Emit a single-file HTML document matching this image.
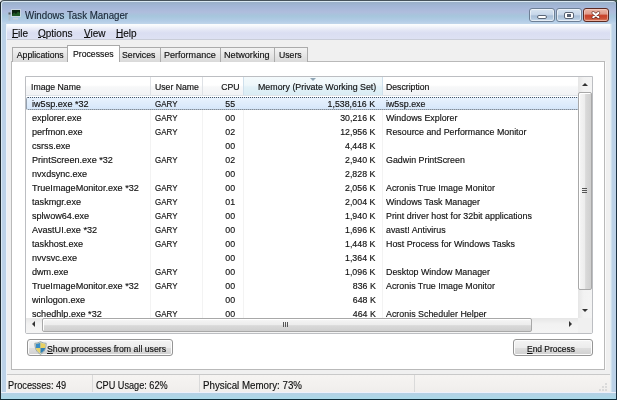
<!DOCTYPE html>
<html><head><meta charset="utf-8">
<style>
*{box-sizing:border-box}
html,body{margin:0;padding:0;width:617px;height:400px;overflow:hidden;background:#fff}
body{position:relative;font-family:"Liberation Sans",sans-serif;color:#111;-webkit-text-stroke:0.15px currentColor}
div,span{position:absolute}
.t{white-space:nowrap;line-height:12px}
.menu{top:27.6px;font-size:10px}
.menu u{text-decoration:underline;text-underline-offset:0px}
.tab{top:47px;height:15px;border:1px solid #ababab;border-bottom:none;background:linear-gradient(#f3f3f3,#e4e4e4 60%,#d9d9d9);}
.tab.sel{top:45px;height:17px;background:#fff;border-color:#a9a9a9}
.tl{top:49px;font-size:8.7px}
.hc{top:83px;font-size:8.7px;line-height:8px}
.row{left:26px;width:552px;height:14px;font-size:9.1px;line-height:14px}
.row span{top:0.3px;white-space:nowrap;transform:scaleX(0.967);transform-origin:0 50%}
.row .c2,.row .c3{transform-origin:100% 50%}
.row .c1{transform:scaleX(0.88)}
.row .c0{transform:scaleX(1.0)}
.row .c4{transform:scaleX(0.975)}
.c0{left:6px}.c1{left:129px}.c2{right:343px}.c3{right:202.5px}.c4{left:360px}
.btn{height:17px;border:1px solid #959595;border-radius:3px;background:linear-gradient(#f4f4f4 0,#ececec 50%,#dfdfdf 51%,#d0d0d0 100%);box-shadow:inset 0 0 0 1px #fcfcfc}
.st{top:379px;font-size:10.3px;transform-origin:0 0;transform:scaleX(0.87)}
.sep{top:375px;width:1px;height:17px;background:#dadada}
.arrow{width:0;height:0;border-style:solid}
</style></head><body><div id="wrap" style="left:0;top:0;width:617px;height:400px;overflow:hidden;filter:blur(0.35px)">
<!-- outer frame -->
<div style="left:611px;top:0;width:6px;height:6px;background:#3c5a48"></div>
<div style="left:0;top:0;width:6px;height:6px;background:#e8ecec"></div>
<div style="left:0;top:0;width:617px;height:400px;background:#46525a;border-radius:4px 4px 0 0"></div>
<div style="left:1px;top:1px;width:615px;height:398px;background:#d9e8f2;border-radius:3px 3px 0 0"></div>
<div style="left:2px;top:2px;width:614px;height:397px;background:linear-gradient(#9ab0c8 0px,#a2b6d6 4px,#afbddd 10px,#a6c6dc 14px,#b2cce6 19px,#bed4ea 21.5px,#bcd2e8 22px,#bcd2e8 100%);border-radius:2px 2px 0 0"></div>
<div style="left:1px;top:392px;width:615px;height:8px;background:linear-gradient(#eef0fb 0,#eef0fb 1px,#b4d0e4 1px,#aad8e8 7px,#0f2c3a 7px)"></div>
<div style="left:616px;top:2px;width:1px;height:398px;background:#1a3040"></div>
<div style="left:610px;top:24px;width:1px;height:368px;background:#e4eef4"></div><div style="left:611px;top:24px;width:1px;height:368px;background:#cddfec"></div>
<div style="left:0;top:2px;width:1px;height:398px;background:#1e2a30"></div>
<div style="left:6px;top:24px;width:604px;height:368px;background:#eef4fb"></div>

<!-- icon -->
<svg style="position:absolute;left:7px;top:8px" width="15" height="14" viewBox="0 0 15 14">
<rect x="4" y="1" width="10" height="8" fill="#d4e0e4" opacity="0.7"/>
<rect x="5" y="2" width="8" height="6" fill="#0c2410"/>
<path d="M5 7 L7 4.5 L9 6 L11 3.5 L13 5 L13 8 L5 8Z" fill="#1f5a26"/>
<rect x="6" y="10" width="5" height="1.5" fill="#c8d4d8"/>
<rect x="1.5" y="4.5" width="2" height="8" fill="#b0bcc4" opacity="0.8"/>
<rect x="1.5" y="4.5" width="2" height="2" fill="#505a60"/>
</svg>
<span class="t" style="left:25px;top:9.5px;font-size:10.2px;color:#1a2636;transform-origin:0 0;transform:scaleX(0.955)">Windows Task Manager</span>

<!-- caption buttons -->
<div style="left:529px;top:8px;width:26px;height:14px;border:1px solid #6d7f95;border-radius:3px;background:linear-gradient(#d8e4f0,#c8d8ea 45%,#a8bed6 58%,#b4cae0 80%,#cadcec);box-shadow:inset 0 0 0 1px rgba(255,255,255,.55)"></div>
<div style="left:537px;top:15px;width:10px;height:4px;background:#fff;border:1px solid #5a6676;border-radius:2px"></div>
<div style="left:556px;top:8px;width:26px;height:14px;border:1px solid #6d7f95;border-radius:3px;background:linear-gradient(#d8e4f0,#c8d8ea 45%,#a8bed6 58%,#b4cae0 80%,#cadcec);box-shadow:inset 0 0 0 1px rgba(255,255,255,.55)"></div>
<div style="left:564px;top:12px;width:10px;height:7px;border:1px solid #5a6676;background:#fff;border-radius:2px"></div>
<div style="left:567px;top:14px;width:4px;height:3px;background:#5a6474"></div>
<div style="left:583px;top:8px;width:26px;height:14px;border:1px solid #5c2a22;border-radius:3px;background:linear-gradient(#ecb8a8,#e09c8c 40%,#c84028 55%,#cc5238 80%,#de8a6c);box-shadow:inset 0 0 0 1px rgba(255,220,210,.5)"></div>
<svg style="position:absolute;left:589px;top:10px" width="14" height="11" viewBox="0 0 14 11"><path d="M4.2 2.9 L9.5 7.2 M9.5 2.9 L4.2 7.2" stroke="#6a3024" stroke-width="3.3" stroke-linecap="round"/><path d="M4.2 2.9 L9.5 7.2 M9.5 2.9 L4.2 7.2" stroke="#fff" stroke-width="2" stroke-linecap="round"/></svg>

<!-- client area -->
<div style="left:7px;top:24px;width:603px;height:368px;background:#f0f0f0"></div>
<div style="left:7px;top:24px;width:603px;height:15px;background:linear-gradient(#fbfdff 0,#f6f8fc 2px,#e4e7f5 6px,#dadef2 9px,#dde1f3 15px)"></div><div style="left:7px;top:39px;width:603px;height:1px;background:#c9cdd8"></div>
<span class="t menu" style="left:12px"><u>F</u>ile</span>
<span class="t menu" style="left:38px"><u>O</u>ptions</span>
<span class="t menu" style="left:84px"><u>V</u>iew</span>
<span class="t menu" style="left:116px"><u>H</u>elp</span>

<!-- panel -->
<div style="left:11px;top:61px;width:594px;height:309px;background:#fff;border:1px solid #b9b9b9"></div>
<div style="left:605px;top:62px;width:1px;height:308px;background:#fafafa"></div>
<div class="tab" style="left:12px;width:56px"></div>
<div class="tab" style="left:119px;width:42px"></div>
<div class="tab" style="left:160px;width:61px"></div>
<div class="tab" style="left:220px;width:55px"></div>
<div class="tab" style="left:274px;width:34px"></div>
<div class="tab sel" style="left:67px;width:53px"></div>
<span class="t tl" style="left:16.8px">Applications</span>
<span class="t tl" style="left:73px;top:48px">Processes</span>
<span class="t tl" style="left:122px">Services</span>
<span class="t tl" style="left:164px;transform-origin:0 0;transform:scaleX(1.04)">Performance</span>
<span class="t tl" style="left:224px;transform-origin:0 0;transform:scaleX(1.05)">Networking</span>
<span class="t tl" style="left:279px">Users</span>

<!-- listview -->
<div style="left:25px;top:76px;width:568px;height:258px;border:1px solid #bcbec2;border-radius:0 0 2px 2px;background:#fff"></div>
<div style="left:26px;top:77px;width:552px;height:18px;background:linear-gradient(#fff 0,#fff 45%,#f7f8f9 55%,#f1f2f4 100%)"></div>
<div style="left:243px;top:77px;width:139px;height:18px;background:linear-gradient(#f4fafc 0,#eef7fa 45%,#e2f1f7 55%,#d9ecf4 100%)"></div>
<div style="left:26px;top:95px;width:552px;height:1px;background:#dfe4ea"></div><div style="left:26px;top:96px;width:552px;height:1px;background:#fff"></div>
<div style="left:150px;top:77px;width:1px;height:18px;background:#dfe2e6"></div>
<div style="left:202px;top:77px;width:1px;height:18px;background:#dfe2e6"></div>
<div style="left:243px;top:77px;width:1px;height:18px;background:#cfe0ec"></div>
<div style="left:382px;top:77px;width:1px;height:18px;background:#cfe0ec"></div>
<div class="arrow" style="left:309.5px;top:78px;border-width:3px 3.5px 0 3.5px;border-color:#8ea4b4 transparent transparent transparent"></div>
<span class="t hc" style="left:31px">Image Name</span>
<span class="t hc" style="left:155px">User Name</span>
<span class="t hc" style="left:221.3px">CPU</span>
<span class="t hc" style="left:258px;font-size:8.85px">Memory (Private Working Set)</span>
<span class="t hc" style="left:386px">Description</span>

<!-- faint column lines in body -->
<div style="left:150px;top:97px;width:1px;height:221px;background:#f3f3f3"></div>
<div style="left:202px;top:97px;width:1px;height:221px;background:#f3f3f3"></div>
<div style="left:243px;top:97px;width:1px;height:221px;background:#f3f3f3"></div>
<div style="left:382px;top:97px;width:1px;height:221px;background:#f3f3f3"></div>

<!-- selected row -->
<div style="left:26px;top:97px;width:566px;height:13px;background:linear-gradient(#e8f2fd,#d6e7fa);border:1px dotted #4a5664;border-radius:2px"></div>

<div style="left:0;top:0;width:617px;height:318px;overflow:hidden">
<div class="row" style="top:97px"><span class="c0">iw5sp.exe *32</span><span class="c1">GARY</span><span class="c2">55</span><span class="c3">1,538,616 K</span><span class="c4">iw5sp.exe</span></div>
<div class="row" style="top:111px"><span class="c0">explorer.exe</span><span class="c1">GARY</span><span class="c2">00</span><span class="c3">30,216 K</span><span class="c4">Windows Explorer</span></div>
<div class="row" style="top:125px"><span class="c0">perfmon.exe</span><span class="c1">GARY</span><span class="c2">02</span><span class="c3">12,956 K</span><span class="c4">Resource and Performance Monitor</span></div>
<div class="row" style="top:139px"><span class="c0">csrss.exe</span><span class="c1"></span><span class="c2">00</span><span class="c3">4,448 K</span><span class="c4"></span></div>
<div class="row" style="top:153px"><span class="c0">PrintScreen.exe *32</span><span class="c1">GARY</span><span class="c2">02</span><span class="c3">2,940 K</span><span class="c4">Gadwin PrintScreen</span></div>
<div class="row" style="top:167px"><span class="c0">nvxdsync.exe</span><span class="c1"></span><span class="c2">00</span><span class="c3">2,828 K</span><span class="c4"></span></div>
<div class="row" style="top:181px"><span class="c0">TrueImageMonitor.exe *32</span><span class="c1">GARY</span><span class="c2">00</span><span class="c3">2,056 K</span><span class="c4">Acronis True Image Monitor</span></div>
<div class="row" style="top:195px"><span class="c0">taskmgr.exe</span><span class="c1">GARY</span><span class="c2">01</span><span class="c3">2,004 K</span><span class="c4">Windows Task Manager</span></div>
<div class="row" style="top:209px"><span class="c0">splwow64.exe</span><span class="c1">GARY</span><span class="c2">00</span><span class="c3">1,940 K</span><span class="c4">Print driver host for 32bit applications</span></div>
<div class="row" style="top:223px"><span class="c0">AvastUI.exe *32</span><span class="c1">GARY</span><span class="c2">00</span><span class="c3">1,696 K</span><span class="c4">avast! Antivirus</span></div>
<div class="row" style="top:237px"><span class="c0">taskhost.exe</span><span class="c1">GARY</span><span class="c2">00</span><span class="c3">1,448 K</span><span class="c4">Host Process for Windows Tasks</span></div>
<div class="row" style="top:251px"><span class="c0">nvvsvc.exe</span><span class="c1"></span><span class="c2">00</span><span class="c3">1,364 K</span><span class="c4"></span></div>
<div class="row" style="top:265px"><span class="c0">dwm.exe</span><span class="c1">GARY</span><span class="c2">00</span><span class="c3">1,096 K</span><span class="c4">Desktop Window Manager</span></div>
<div class="row" style="top:279px"><span class="c0">TrueImageMonitor.exe *32</span><span class="c1">GARY</span><span class="c2">00</span><span class="c3">836 K</span><span class="c4">Acronis True Image Monitor</span></div>
<div class="row" style="top:293px"><span class="c0">winlogon.exe</span><span class="c1"></span><span class="c2">00</span><span class="c3">648 K</span><span class="c4"></span></div>
<div class="row" style="top:307px"><span class="c0">schedhlp.exe *32</span><span class="c1">GARY</span><span class="c2">00</span><span class="c3">464 K</span><span class="c4">Acronis Scheduler Helper</span></div>
</div>

<!-- vscroll -->
<div style="left:578px;top:77px;width:14px;height:241px;background:linear-gradient(90deg,#e6e6e6,#f2f2f2 40%,#f4f4f4)"></div>
<div class="arrow" style="left:582px;top:83px;border-width:0 3.5px 3.5px 3.5px;border-color:transparent transparent #333 transparent"></div>
<div style="left:578px;top:92px;width:14px;height:198px;border:1px solid #a8a8a8;border-radius:2px;background:linear-gradient(90deg,#f6f6f6,#ececec 50%,#d9d9d9 55%,#cfcfcf);box-shadow:inset 1px 1px 0 #fff"></div>
<div style="left:582px;top:188px;width:5px;height:1px;background:#555"></div>
<div style="left:582px;top:190px;width:5px;height:1px;background:#555"></div>
<div style="left:582px;top:192px;width:5px;height:1px;background:#555"></div>
<div class="arrow" style="left:582px;top:309px;border-width:3.5px 3.5px 0 3.5px;border-color:#333 transparent transparent transparent"></div>

<!-- hscroll -->
<div style="left:26px;top:318px;width:566px;height:15px;background:linear-gradient(#e6e6e6,#f2f2f2 40%,#f4f4f4)"></div>
<div class="arrow" style="left:32px;top:321px;border-width:3.5px 3.5px 3.5px 0;border-color:transparent #333 transparent transparent"></div>
<div style="left:42px;top:318px;width:490px;height:14px;border:1px solid #a8a8a8;border-radius:2px;background:linear-gradient(#f6f6f6,#ececec 50%,#d9d9d9 55%,#cfcfcf);box-shadow:inset 1px 1px 0 #fff"></div>
<div style="left:283px;top:322px;width:1px;height:5px;background:#555"></div>
<div style="left:285px;top:322px;width:1px;height:5px;background:#555"></div>
<div style="left:287px;top:322px;width:1px;height:5px;background:#555"></div>
<div class="arrow" style="left:569px;top:321px;border-width:3.5px 0 3.5px 3.5px;border-color:transparent transparent transparent #333"></div>
<div style="left:578px;top:318px;width:14px;height:15px;background:#f0f0f0"></div>

<!-- buttons -->
<div class="btn" style="left:27px;top:339px;width:146px"></div>
<svg style="position:absolute;left:34px;top:341px" width="13" height="14" viewBox="0 0 13 14">
<path d="M6.5 0.6 C4.5 1.8 2.6 2.2 0.8 2.2 C0.8 7.5 2.5 11 6.5 13.4 C10.5 11 12.2 7.5 12.2 2.2 C10.4 2.2 8.5 1.8 6.5 0.6Z" fill="#d8dcc8" stroke="#8a9aa0" stroke-width="0.8"/>
<path d="M6.5 1.6 C4.8 2.6 3.3 3 1.8 3 L1.8 7 L6.5 7Z" fill="#3a8cc4"/>
<path d="M6.5 1.6 C8.2 2.6 9.7 3 11.2 3 L11.2 7 L6.5 7Z" fill="#e8d060"/>
<path d="M1.8 7 L6.5 7 L6.5 12.3 C3.4 10.4 2 8.5 1.8 7Z" fill="#e6d26a"/>
<path d="M11.2 7 L6.5 7 L6.5 12.3 C9.6 10.4 11 8.5 11.2 7Z" fill="#2f7fb6"/>
</svg>
<span class="t" style="left:47px;top:343px;font-size:8.75px"><u style="text-decoration:underline">S</u>how processes from all users</span>
<div class="btn" style="left:513px;top:339px;width:80px"></div>
<span class="t" style="left:527px;top:343px;font-size:8.45px"><u>E</u>nd Process</span>

<!-- status bar -->
<div style="left:7px;top:374px;width:603px;height:1px;background:#c9c9c9"></div>
<div style="left:7px;top:375px;width:603px;height:17px;background:linear-gradient(#f6f4f2,#f0eeec)"></div>
<div class="sep" style="left:92px"></div>
<div class="sep" style="left:199px"></div>
<div class="sep" style="left:414px"></div>
<span class="t st" style="left:8.1px;top:379.6px;transform:scaleX(0.892)">Processes: 49</span>
<span class="t st" style="left:96.3px;top:379.6px;transform:scaleX(0.888)">CPU Usage: 62%</span>
<span class="t st" style="left:203.3px;top:379.6px;transform:scaleX(0.945)">Physical Memory: 73%</span>
<!-- grip -->
<div style="left:605px;top:383px;width:2px;height:2px;background:#dadada"></div>
<div style="left:605px;top:386px;width:2px;height:2px;background:#dadada"></div>
<div style="left:602px;top:386px;width:2px;height:2px;background:#dadada"></div>
<div style="left:605px;top:389px;width:2px;height:2px;background:#dadada"></div>
<div style="left:602px;top:389px;width:2px;height:2px;background:#dadada"></div>
<div style="left:599px;top:389px;width:2px;height:2px;background:#dadada"></div>
</div></body></html>
